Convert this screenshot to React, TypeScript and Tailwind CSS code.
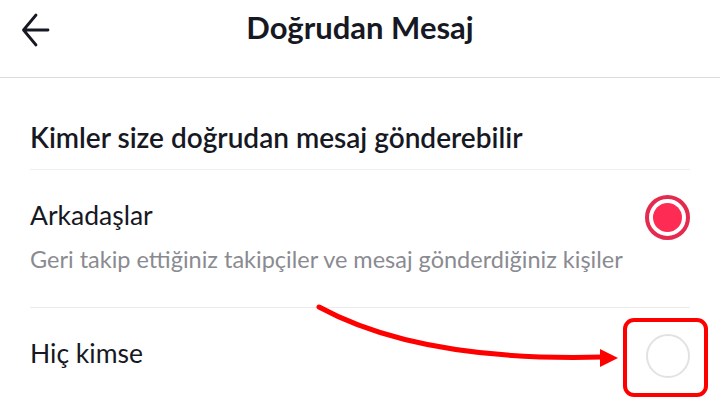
import React from 'react';

function BackArrow() {
  return (
    <svg width="30" height="36" viewBox="0 0 30 36" fill="none">
      <path d="M27 18H3M15 3L2.5 18 15 33" stroke="#161823" strokeWidth="2.8" strokeLinecap="round" strokeLinejoin="round" />
    </svg>
  );
}

function Radio({ checked }: { checked: boolean }) {
  if (checked) {
    return (
      <div className="w-[45px] h-[45px] rounded-full border-[4px] border-[#e42a4e] flex items-center justify-center">
        <div className="w-[29px] h-[29px] rounded-full bg-[#fe2c55]" />
      </div>
    );
  }
  return <div className="w-[44px] h-[44px] rounded-full border-[2.5px] border-[#e2e2e3]" />;
}

export default function App() {
  return (
    <div
      className="relative w-[720px] h-[416px] overflow-hidden bg-white text-[#161823]"
      style={{ fontFamily: 'Lato, "Open Sans", sans-serif' }}
    >
      {/* Header */}
      <div className="h-[78px] border-b border-[#dcdcdd] grid grid-cols-[1fr_auto_1fr] items-start">
        <div className="pl-[21px] pt-[12px]">
          <BackArrow />
        </div>
        <h1 className="pt-[9px] text-[31px] font-bold leading-[37px]">Doğrudan Mesaj</h1>
        <div />
      </div>

      {/* Content */}
      <div className="px-[30px]">
        <div className="pt-[43px] pb-[15px] border-b border-[#efeff0]">
          <p className="text-[28px] font-semibold leading-[33px]">Kimler size doğrudan mesaj gönderebilir</p>
        </div>

        <div className="flex justify-between items-start border-b border-[#ebebec]">
          <div className="pt-[30px] pb-[34px]">
            <p className="text-[26.5px] leading-[31px]">Arkadaşlar</p>
            <p className="mt-[15px] text-[23.5px] leading-[27px] text-[#8a8b91]">
              Geri takip ettiğiniz takipçiler ve mesaj gönderdiğiniz kişiler
            </p>
          </div>
          <div className="mt-[25px]">
            <Radio checked />
          </div>
        </div>

        <div className="flex justify-between items-start">
          <p className="pt-[30px] text-[26.5px] leading-[31px]">Hiç kimse</p>
          <div className="mt-[26px]">
            <Radio checked={false} />
          </div>
        </div>
      </div>

      {/* Annotation overlay */}
      <svg className="absolute inset-0 pointer-events-none" width="720" height="416" viewBox="0 0 720 416" fill="none">
        <path d="M319 307 Q 420 362 603 357" stroke="#f00" strokeWidth="5" strokeLinecap="round" />
        <path d="M618 358 L600 349 L600 367 Z" fill="#f00" />
        <rect x="625" y="320" width="81" height="75" rx="9" stroke="#f00" strokeWidth="4" />
      </svg>
    </div>
  );
}
